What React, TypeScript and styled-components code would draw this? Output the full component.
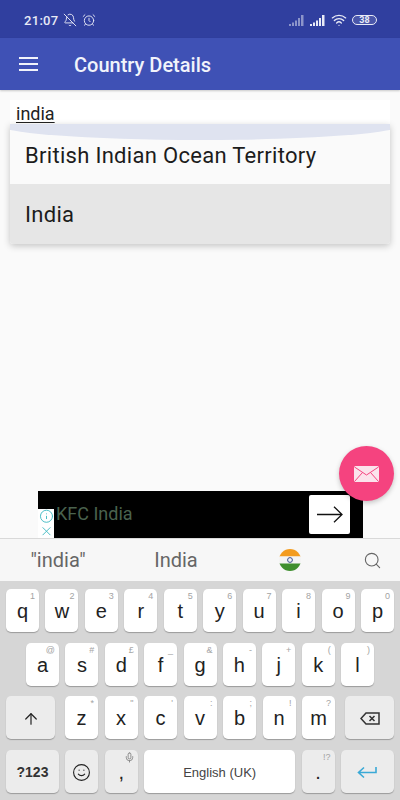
import React from 'react';
import styled, { createGlobalStyle } from 'styled-components';
import { AlarmClock, ArrowUp, BellOff, Info, Mic, Search, Smile, Wifi, X } from 'lucide-react';

const GlobalStyle = createGlobalStyle`
  html, body {
    margin: 0;
    padding: 0;
    background: #fafafa;
    font-family: Roboto, "Liberation Sans", sans-serif;
  }
  * {
    box-sizing: border-box;
  }
`;

const Screen = styled.div`
  width: 400px;
  height: 800px;
  display: flex;
  flex-direction: column;
  overflow: hidden;
`;

const StatusBar = styled.div`
  height: 38px;
  flex: none;
  background: #303f9f;
  color: #e8eaf6;
  display: flex;
  align-items: center;
  padding: 2px 23px 0 24px;
  gap: 5px;
`;
const StatusTime = styled.span`
  font-size: 13px;
  font-weight: 500;
  letter-spacing: 0.3px;
`;
const StatusRight = styled.div`
  margin-left: auto;
  display: flex;
  align-items: center;
  gap: 5px;
`;
const Battery = styled.div`
  width: 25px;
  height: 10px;
  border: 1px solid #e8eaf6;
  border-radius: 5px;
  font-size: 9px;
  font-weight: 700;
  line-height: 9px;
  text-align: center;
  background: rgba(255, 255, 255, 0.12);
`;

const AppBar = styled.div`
  height: 52px;
  flex: none;
  background: #3f51b5;
  display: flex;
  align-items: center;
  padding: 0 0 0 19px;
  box-shadow: 0 1px 2px rgba(0, 0, 0, 0.2);
  position: relative;
  z-index: 2;
`;
const MenuIcon = styled.div`
  width: 19px;
  height: 14px;
  border-top: 2px solid #f1f3fb;
  border-bottom: 2px solid #f1f3fb;
  position: relative;
  &::after {
    content: '';
    position: absolute;
    left: 0;
    right: 0;
    top: 4px;
    height: 2px;
    background: #f1f3fb;
  }
`;
const Title = styled.div`
  margin-left: 36px;
  margin-top: 2px;
  font-size: 20px;
  font-weight: 500;
  color: #f1f3fb;
`;

const Content = styled.div`
  flex: 1;
  position: relative;
  display: flex;
  flex-direction: column;
  padding-top: 10px;
  background: #fafafa;
`;
const SearchField = styled.div`
  margin: 0 10px;
  height: 30px;
  background: #fff;
  padding: 3px 6px 0;
  font-size: 18px;
  line-height: 22px;
  color: #222;
  text-decoration: underline;
  text-underline-offset: 2px;
`;
const Dropdown = styled.div`
  position: absolute;
  left: 10px;
  right: 10px;
  top: 34px;
  height: 120px;
  border-radius: 0 0 3px 3px;
  overflow: hidden;
  box-shadow: 0 2px 7px rgba(0, 0, 0, 0.22);
`;
const DropdownBand = styled.div`
  position: absolute;
  left: -15px;
  right: -15px;
  top: 0;
  height: 16px;
  background: #dfe3f0;
  border-radius: 0 0 50% 50% / 0 0 100% 100%;
`;
const DropdownItem = styled.div<{ $active?: boolean }>`
  height: 60px;
  display: flex;
  align-items: center;
  padding: ${p => (p.$active ? '0' : '2px')} 15px 0;
  font-size: 22px;
  letter-spacing: 0.3px;
  color: #1c1c1c;
  background: ${p => (p.$active ? '#e6e6e6' : '#fafafa')};
`;

const Fab = styled.div`
  position: absolute;
  right: 6px;
  bottom: 37px;
  width: 55px;
  height: 55px;
  border-radius: 50%;
  background: #f5437f;
  display: flex;
  align-items: center;
  justify-content: center;
  box-shadow: 0 2px 5px rgba(0, 0, 0, 0.22);
  z-index: 1;
`;

const AdBanner = styled.div`
  margin: auto 0 0 38px;
  width: 325px;
  height: 47px;
  background: #000;
  display: flex;
  align-items: center;
  position: relative;
`;
const AdChoices = styled.div`
  align-self: flex-end;
  width: 16px;
  height: 29px;
  background: #fff;
  color: #45bcc4;
  display: flex;
  flex-direction: column;
  align-items: center;
  justify-content: space-around;
`;
const AdText = styled.div`
  margin: 0 0 3px 2px;
  font-size: 18px;
  color: #4a624e;
`;
const AdButton = styled.div`
  margin-left: auto;
  margin-right: 13px;
  width: 41px;
  height: 39px;
  background: #fff;
  border-radius: 2px;
  display: flex;
  align-items: center;
  justify-content: center;
`;

const SuggestionStrip = styled.div`
  height: 43px;
  flex: none;
  background: #f7f7f7;
  border-top: 1px solid #d9d9d9;
  display: grid;
  grid-template-columns: 116px 120px 108px 56px;
  align-items: center;
  justify-items: center;
  font-size: 20px;
  color: #666;
`;

const Keyboard = styled.div`
  height: 219px;
  flex: none;
  background: #d6d6d6;
  padding-top: 8px;
  display: flex;
  flex-direction: column;
  gap: 10.6px;
  font-family: "Liberation Sans", Arial, sans-serif;
`;
const KeyRow = styled.div<{ $inset?: number }>`
  height: 43px;
  display: flex;
  justify-content: space-between;
  padding: 0 ${p => p.$inset ?? 6}px;
`;
const LetterGroup = styled.div`
  width: 270px;
  display: flex;
  justify-content: space-between;
`;
const Key = styled.div<{ $w?: number; $dark?: boolean }>`
  position: relative;
  width: ${p => p.$w ?? 33}px;
  height: 43px;
  border-radius: 5px;
  background: ${p => (p.$dark ? '#ececec' : '#fff')};
  box-shadow: 0 1px 1px rgba(0, 0, 0, 0.28);
  display: flex;
  align-items: center;
  justify-content: center;
  padding-top: 2px;
  font-size: 20px;
  color: #222;
`;
const KeyHint = styled.span`
  position: absolute;
  top: 2px;
  right: 4px;
  font-size: 9px;
  color: #a3a3a3;
`;
const SmallLabel = styled.span<{ $bold?: boolean }>`
  font-size: ${p => (p.$bold ? 14 : 13)}px;
  font-weight: ${p => (p.$bold ? 700 : 400)};
  color: ${p => (p.$bold ? '#333' : '#444')};
`;
const MicHint = styled.span`
  position: absolute;
  top: 2px;
  right: 3px;
  color: #666;
  display: flex;
`;

const SignalIcon = ({ dim }: { dim?: boolean }) => (
  <svg width="16" height="11" viewBox="0 0 16 11" fill="#e8eaf6" opacity={dim ? 0.5 : 1}>
    <rect x="0" y="9" width="2" height="2" />
    <rect x="3" y="7.5" width="2" height="3.5" />
    <rect x="6" y="5.5" width="2" height="5.5" />
    <rect x="9" y="3" width="2" height="8" />
    <rect x="12" y="0" width="2.5" height="11" />
  </svg>
);

const MailIcon = () => (
  <svg width="25" height="16" viewBox="0 0 25 16">
    <rect width="25" height="16" rx="1.5" fill="#fbe3ec" />
    <path d="M0.5 1 12.5 9 24.5 1M0.5 15.5 8.5 6.5M24.5 15.5 16.5 6.5" fill="none" stroke="#f5437f" strokeWidth="1" />
  </svg>
);

const IndiaFlag = () => (
  <svg width="22" height="22" viewBox="0 0 22 22">
    <defs>
      <clipPath id="flagDisc">
        <circle cx="11" cy="11" r="11" />
      </clipPath>
    </defs>
    <g clipPath="url(#flagDisc)">
      <rect width="22" height="7.5" fill="#f39c1f" />
      <rect y="7.5" width="22" height="7" fill="#f4f4f4" />
      <rect y="14.5" width="22" height="7.5" fill="#3f8f2f" />
    </g>
    <circle cx="11" cy="11" r="2.4" fill="none" stroke="#3a4f8f" strokeWidth="1" />
  </svg>
);

const BackspaceIcon = () => (
  <svg width="20" height="13" viewBox="0 0 20 13" fill="none" stroke="#333" strokeWidth="1.5">
    <path d="M6 1h13v11H6L1 6.5z" />
    <path d="M9.5 4l5 5M14.5 4l-5 5" />
  </svg>
);

const EnterIcon = () => (
  <svg width="20" height="13" viewBox="0 0 20 13" fill="none" stroke="#3aa9d6" strokeWidth="1.6">
    <path d="M19 1v5.5H2M7 1.5 1.5 6.5 7 11.5" />
  </svg>
);

const AdArrow = () => (
  <svg width="26" height="17" viewBox="0 0 26 17" fill="none" stroke="#111" strokeWidth="1.3">
    <path d="M0 8.5h25M17 .7l8 7.8-8 7.8" />
  </svg>
);

const topRow: [string, string][] = [
  ['q', '1'], ['w', '2'], ['e', '3'], ['r', '4'], ['t', '5'],
  ['y', '6'], ['u', '7'], ['i', '8'], ['o', '9'], ['p', '0'],
];
const homeRow: [string, string][] = [
  ['a', '@'], ['s', '#'], ['d', '£'], ['f', '_'], ['g', '&'],
  ['h', '-'], ['j', '+'], ['k', '('], ['l', ')'],
];
const lowRow: [string, string][] = [
  ['z', '*'], ['x', '"'], ['c', "'"], ['v', ':'], ['b', ';'], ['n', '!'], ['m', '?'],
];

const LetterKeys = ({ keys }: { keys: [string, string][] }) => (
  <>
    {keys.map(([letter, hint]) => (
      <Key key={letter}>
        <KeyHint>{hint}</KeyHint>
        {letter}
      </Key>
    ))}
  </>
);

const App = () => (
  <Screen>
    <GlobalStyle />
    <StatusBar>
      <StatusTime>21:07</StatusTime>
      <BellOff size={14} strokeWidth={1.6} />
      <AlarmClock size={14} strokeWidth={1.6} />
      <StatusRight>
        <SignalIcon dim />
        <SignalIcon />
        <Wifi size={16} strokeWidth={2} />
        <Battery>38</Battery>
      </StatusRight>
    </StatusBar>
    <AppBar>
      <MenuIcon />
      <Title>Country Details</Title>
    </AppBar>
    <Content>
      <SearchField>india</SearchField>
      <Dropdown>
        <DropdownItem>British Indian Ocean Territory</DropdownItem>
        <DropdownItem $active>India</DropdownItem>
        <DropdownBand />
      </Dropdown>
      <Fab>
        <MailIcon />
      </Fab>
      <AdBanner>
        <AdChoices>
          <Info size={15} strokeWidth={1.6} />
          <X size={15} strokeWidth={1.6} />
        </AdChoices>
        <AdText>KFC India</AdText>
        <AdButton>
          <AdArrow />
        </AdButton>
      </AdBanner>
    </Content>
    <SuggestionStrip>
      <span>"india"</span>
      <span>India</span>
      <IndiaFlag />
      <Search size={19} strokeWidth={1.4} color="#666" />
    </SuggestionStrip>
    <Keyboard>
      <KeyRow>
        <LetterKeys keys={topRow} />
      </KeyRow>
      <KeyRow $inset={26}>
        <LetterKeys keys={homeRow} />
      </KeyRow>
      <KeyRow>
        <Key $w={49} $dark>
          <ArrowUp size={18} strokeWidth={1.6} color="#222" />
        </Key>
        <LetterGroup>
          <LetterKeys keys={lowRow} />
        </LetterGroup>
        <Key $w={49} $dark>
          <BackspaceIcon />
        </Key>
      </KeyRow>
      <KeyRow>
        <Key $w={53} $dark>
          <SmallLabel $bold>?123</SmallLabel>
        </Key>
        <Key $dark>
          <Smile size={19} strokeWidth={1.4} color="#222" />
        </Key>
        <Key $dark>
          <MicHint>
            <Mic size={11} strokeWidth={1.5} />
          </MicHint>
          <span>,</span>
        </Key>
        <Key $w={151}>
          <SmallLabel>English (UK)</SmallLabel>
        </Key>
        <Key $dark>
          <KeyHint>!?</KeyHint>
          <span>.</span>
        </Key>
        <Key $w={53} $dark>
          <EnterIcon />
        </Key>
      </KeyRow>
    </Keyboard>
  </Screen>
);

export default App;
